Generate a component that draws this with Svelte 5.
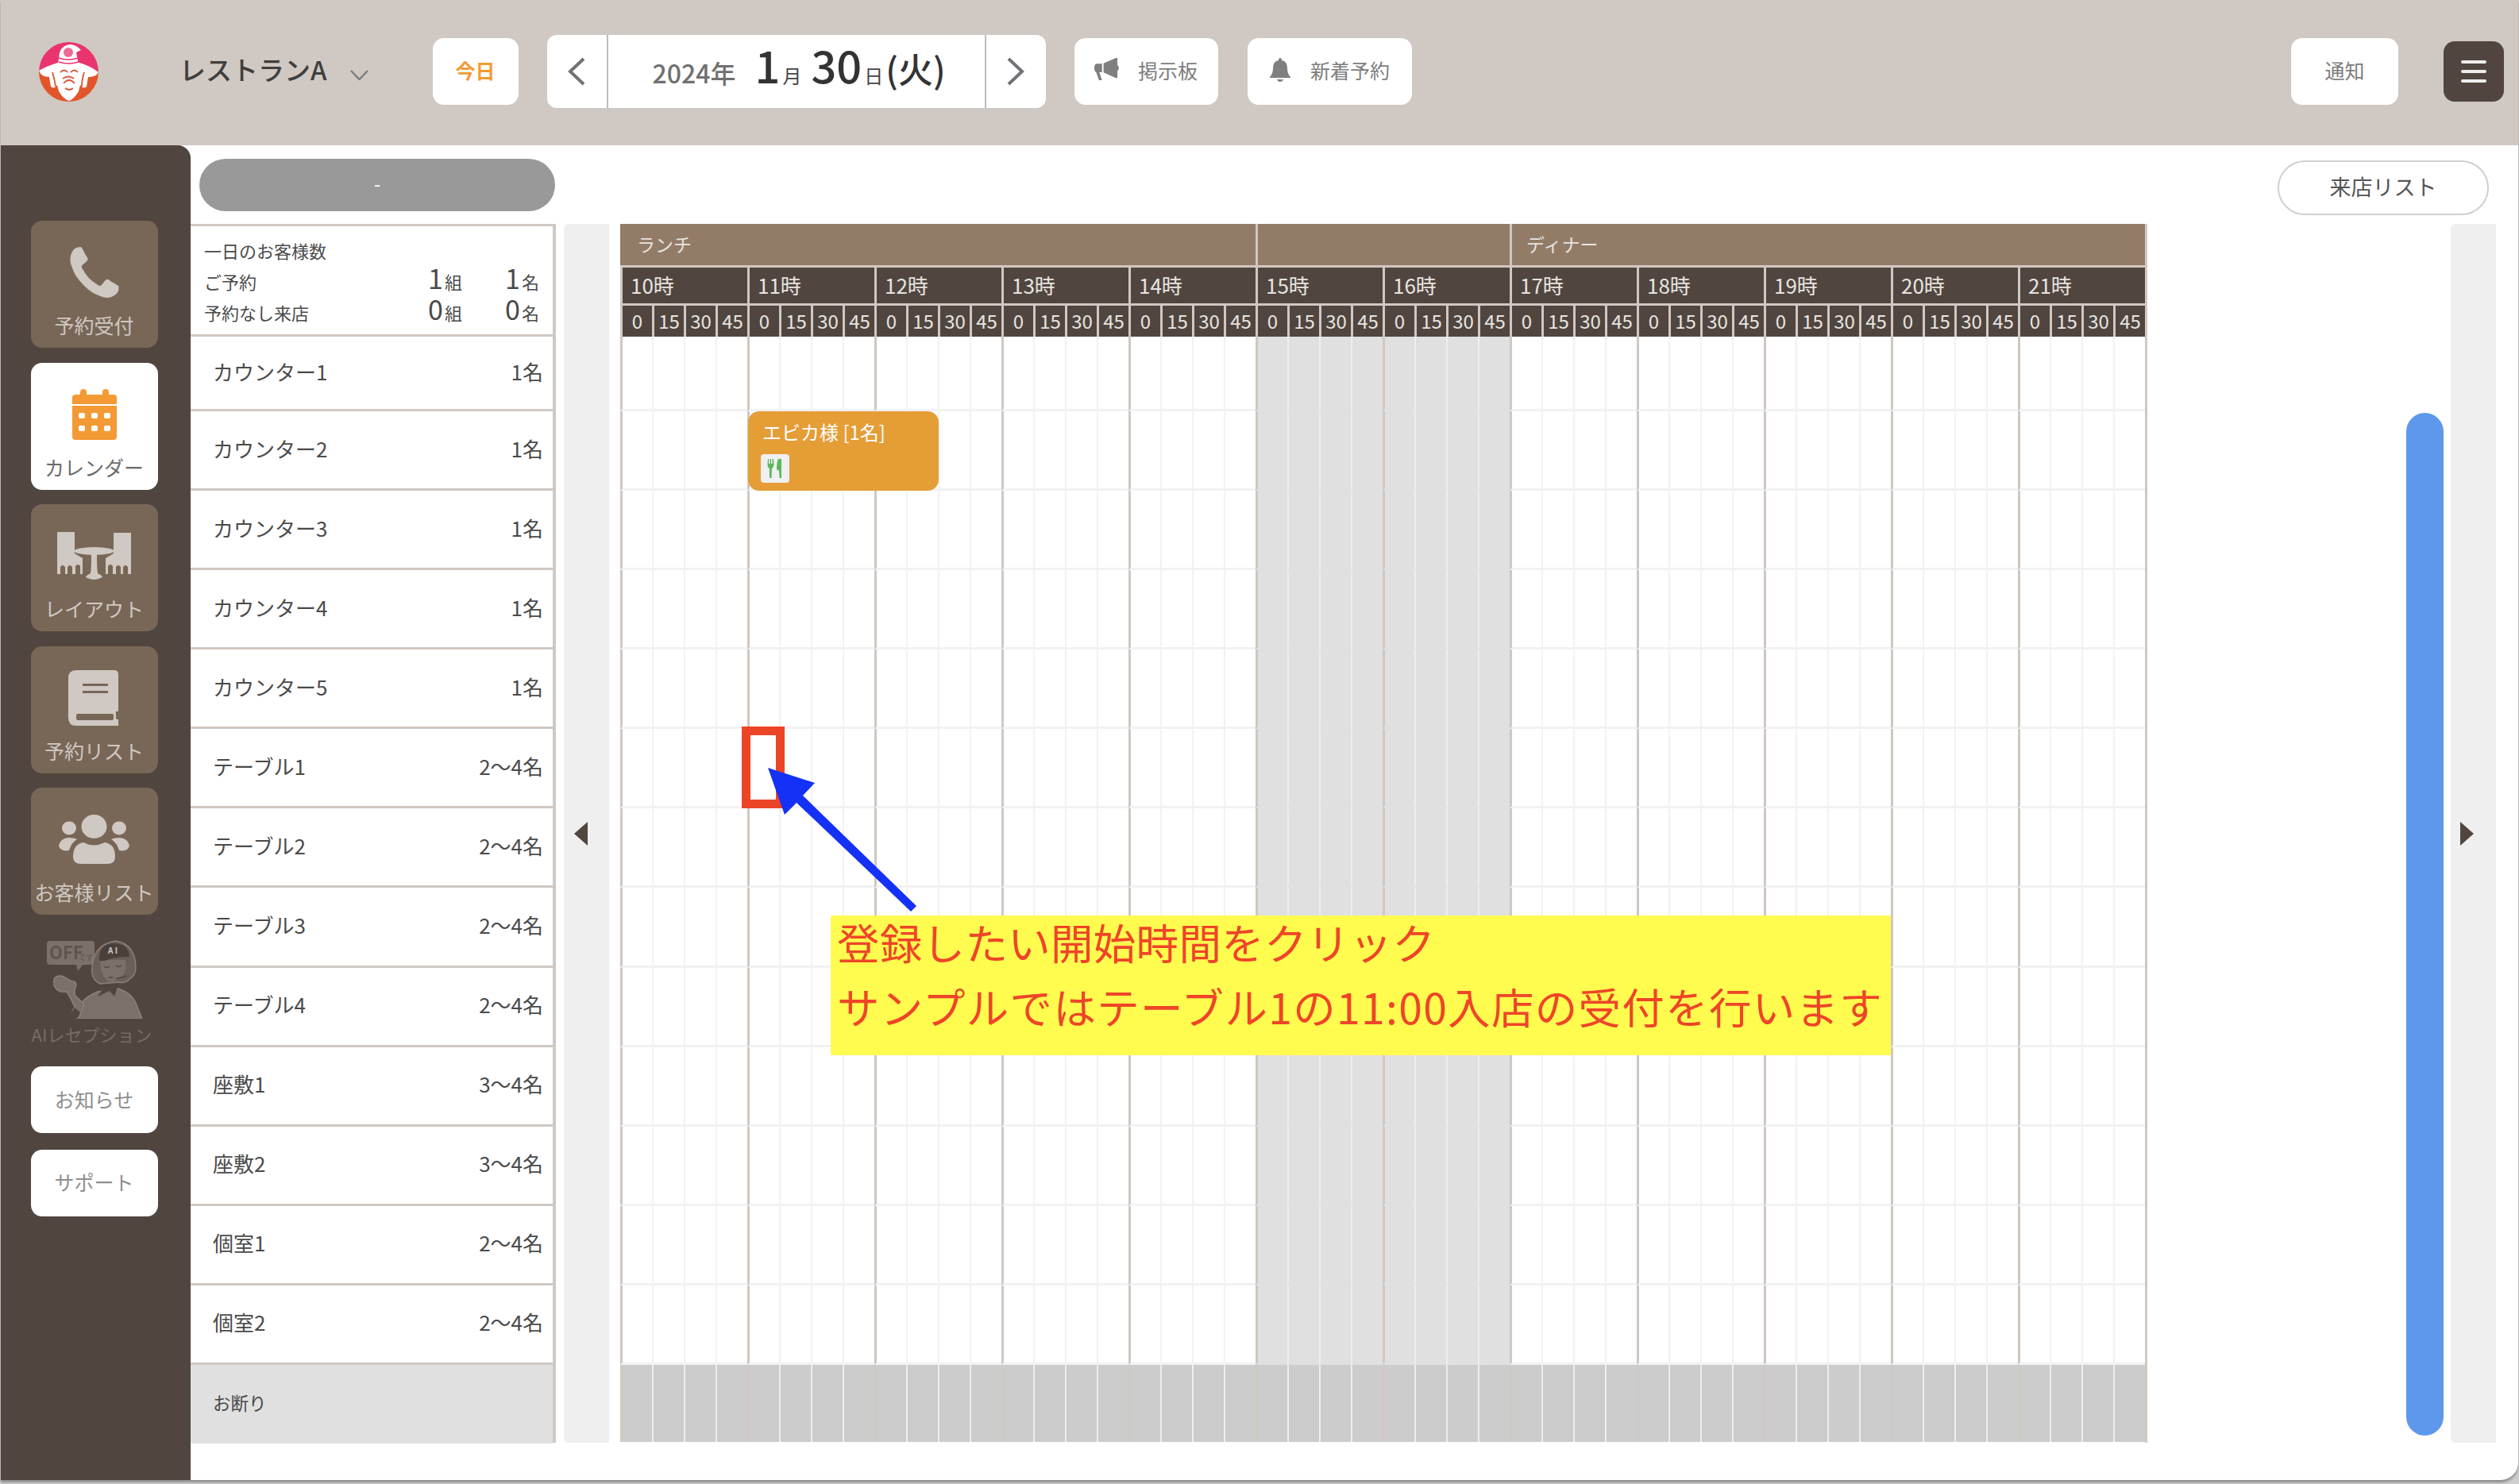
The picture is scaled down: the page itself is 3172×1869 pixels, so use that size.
<script>
  const hours = [10, 11, 12, 13, 14, 15, 16, 17, 18, 19, 20, 21];
  const minutes = [0, 15, 30, 45];

  const seats = [
    { name: "カウンター1", cap: "1名" },
    { name: "カウンター2", cap: "1名" },
    { name: "カウンター3", cap: "1名" },
    { name: "カウンター4", cap: "1名" },
    { name: "カウンター5", cap: "1名" },
    { name: "テーブル1", cap: "2〜4名" },
    { name: "テーブル2", cap: "2〜4名" },
    { name: "テーブル3", cap: "2〜4名" },
    { name: "テーブル4", cap: "2〜4名" },
    { name: "座敷1", cap: "3〜4名" },
    { name: "座敷2", cap: "3〜4名" },
    { name: "個室1", cap: "2〜4名" },
    { name: "個室2", cap: "2〜4名" },
  ];

  // 15時 and 16時 are the closed hours between lunch and dinner
  const isClosed = (h) => h === 15 || h === 16;
</script>

<div class="screen">
  <div class="window">
    <header class="topbar">
      <svg class="logo" viewBox="0 0 75 75">
        <defs>
          <clipPath id="logo-clip"><circle cx="37.5" cy="37.5" r="37.5" /></clipPath>
        </defs>
        <g clip-path="url(#logo-clip)">
          <rect width="75" height="36" fill="#e9346f" />
          <rect y="36" width="75" height="39" fill="#e2552b" />
          <path d="M0 36 Q10 30 24 26 L51 26 Q65 30 75 38 Q72 44 62 44 L60 56 Q56 60 52 54 L50 62 Q44 72 38 74 Q31 72 25 62 L23 54 Q19 60 15 56 L13 44 Q3 44 0 36Z" fill="#fff" />
          <path d="M24 28 L26 13 Q30 3 40 3 Q48 4 53 10 L47 13 L50 28Z" fill="#fff" />
          <circle cx="37" cy="13" r="6" fill="#ec6b92" />
          <path d="M25 20 Q37 24 50 20 M25 25 Q37 29 50 25" stroke="#e9346f" stroke-width="1.6" fill="none" />
          <path d="M27 38 Q32 33 36 38 M40 38 Q45 33 49 38 M17 38 Q20 48 21 56 M57 38 Q54 48 54 56 M31 52 Q38 44 45 52 M33 58 Q38 62 43 58 M30 46 Q37 41 44 46" stroke="#d8573a" stroke-width="1.8" fill="none" />
        </g>
      </svg>

      <div class="shop">レストランA</div>
      <svg class="shop-caret" viewBox="0 0 23 13"><path d="M1 1 L11.5 12 L22 1" /></svg>

      <button class="btn today">今日</button>

      <div class="date-box">
        <div class="date-nav">
          <svg viewBox="0 0 22 36"><path d="M20 2 L3 18 L20 34" /></svg>
        </div>
        <div class="date-label">
          <span class="year">2024年</span>
          <span class="big month">1</span><span class="unit">月</span>
          <span class="big day">30</span><span class="unit">日</span><span class="dow">(火)</span>
        </div>
        <div class="date-nav">
          <svg viewBox="0 0 22 36"><path d="M2 2 L19 18 L2 34" /></svg>
        </div>
      </div>

      <button class="btn board">
        <svg viewBox="0 0 32 30" width="31" height="29">
          <path d="M30 0 L30 26 L28 26 L12 19 L12 7 L28 0Z M10 7.5 L10 18.5 L6 18.5 L7 20 L10 29 L6 29 L2.5 19 Q0 18 0 13 Q0 8 3 7.5Z M30 9 Q32 11 32 13 Q32 15 30 17Z" fill="#7f7f7f" />
        </svg>
        <span>掲示板</span>
      </button>

      <button class="btn fresh">
        <svg viewBox="0 0 28 30" width="28" height="30">
          <path d="M14 0 Q16 0 16 3 Q23 4 23 13 Q23 20 27 24 L27 25 L1 25 L1 24 Q5 20 5 13 Q5 4 12 3 Q12 0 14 0Z M10 27 L18 27 Q17 30 14 30 Q11 30 10 27Z" fill="#7f7f7f" />
        </svg>
        <span>新着予約</span>
      </button>

      <button class="btn notify">通知</button>

      <button class="menu">
        <i></i><i></i><i></i>
      </button>
    </header>

    <div class="body">
      <aside class="side">
        <div class="nav-item">
          <div class="nav-icon">
            <svg viewBox="0 0 1408 1408" width="64" height="64" class="phone">
              <path fill="#d0c8c2" d="M1408 1112q0 27-10 70.5t-21 68.5q-21 50-122 106-94 51-186 51-27 0-53-3.5t-57.5-12.5-47-14.5-55.5-20.5-49-18q-98-35-175-83-127-79-264-216t-216-264q-48-77-83-175-3-9-18-49t-20.5-55.5-14.5-47-12.5-57.5-3.5-53q0-92 51-186 56-101 106-122 25-11 68.5-21t70.5-10q14 0 21 3 18 6 53 76 11 19 30 54t35 63.5 31 53.5q3 4 17.5 25t21.5 35.5 7 28.5q0 20-28.5 50t-62 55-62 53-28.5 46q0 9 5 22.5t8.5 20.5 14 24 11.5 19q76 137 174 235t235 174q2 1 19 11.5t24 14 20.5 8.5 22.5 5q18 0 46-28.5t53-62 55-62 50-28.5q14 0 28.5 7t35.5 21.5 25 17.5q25 15 53.5 31t63.5 35 54 30q70 35 76 53 3 7 3 21z" />
            </svg>
          </div>
          <span>予約受付</span>
        </div>

        <div class="nav-item active">
          <div class="nav-icon">
            <svg viewBox="0 0 56 64" width="56" height="64">
              <path fill="#f39a34" d="M14 0 Q18 0 18 4 L18 7 L38 7 L38 4 Q38 0 42 0 Q46 0 46 4 L46 7 L52 7 Q56 7 56 11 L56 19 L0 19 L0 11 Q0 7 4 7 L10 7 L10 4 Q10 0 14 0Z M0 21 L56 21 L56 60 Q56 64 52 64 L4 64 Q0 64 0 60Z" />
              <g fill="#fff">
                <rect x="8" y="30" width="8" height="7" rx="2" />
                <rect x="24" y="30" width="8" height="7" rx="2" />
                <rect x="40" y="30" width="8" height="7" rx="2" />
                <rect x="8" y="46" width="8" height="7" rx="2" />
                <rect x="24" y="46" width="8" height="7" rx="2" />
                <rect x="40" y="46" width="8" height="7" rx="2" />
              </g>
            </svg>
          </div>
          <span>カレンダー</span>
        </div>

        <div class="nav-item">
          <div class="nav-icon">
            <svg viewBox="0 0 95 60" width="95" height="60">
              <g fill="#d0c8c2">
                <path d="M1 0 L23 0 L23 27 L33 33 L33 53 L30 53 L30 43 Q27 39 24 43 L24 53 L20 53 L20 44 Q17 40 14 44 L14 53 L11 53 L11 44 Q8 40 5 44 L5 53 L1 53Z" />
                <path d="M94 1 L72 1 L72 27 L62 33 L62 53 L65 53 L65 43 Q68 39 71 43 L71 53 L75 53 L75 44 Q78 40 81 44 L81 53 L84 53 L84 44 Q87 40 90 44 L90 53 L94 53Z" />
                <ellipse cx="47.5" cy="24" rx="25" ry="5" />
                <path d="M44 28 L51 28 Q51 46 52 52 Q58 55 58 57 Q52 60 47.5 60 Q43 60 37 57 Q37 55 43 52 Q44 46 44 28Z" />
              </g>
            </svg>
          </div>
          <span>レイアウト</span>
        </div>

        <div class="nav-item">
          <div class="nav-icon">
            <svg viewBox="0 0 63 70" width="63" height="70" class="book">
              <path fill="#d0c8c2" d="M10 0 L57 0 Q63 0 63 5 L63 52 L60 52 Q60 53 60 61 Q60 62 63 62 L63 70 L10 70 Q0 70 0 60 L0 10 Q0 0 10 0Z" />
              <rect x="10" y="55" width="47" height="8" rx="2" fill="#786757" />
              <rect x="18" y="17" width="32" height="3" fill="#786757" />
              <rect x="18" y="26" width="32" height="3" fill="#786757" />
            </svg>
          </div>
          <span>予約リスト</span>
        </div>

        <div class="nav-item">
          <div class="nav-icon">
            <svg viewBox="0 0 89 62" width="89" height="62">
              <g fill="#d0c8c2">
                <ellipse cx="44.5" cy="15" rx="16" ry="15" />
                <ellipse cx="13" cy="17" rx="9" ry="8.5" />
                <ellipse cx="76" cy="17" rx="9" ry="8.5" />
                <path d="M28 62 Q18 62 18 53 Q18 37 31 35 Q44 42 58 35 Q71 37 71 53 Q71 62 61 62Z" />
                <path d="M0 39 Q2 30 12 29 Q19 29 23 31 Q16 35 13 45 Q2 47 0 39Z" />
                <path d="M89 39 Q87 30 77 29 Q70 29 66 31 Q73 35 76 45 Q87 47 89 39Z" />
              </g>
            </svg>
          </div>
          <span>お客様リスト</span>
        </div>

        <div class="ai">
          <svg viewBox="0 0 122 100" width="122" height="100">
            <!-- speech bubble -->
            <path d="M5 2 L57 2 Q61 2 61 6 L61 28 Q61 32 57 32 L46 32 L40 40 L38 32 L5 32 Q1 32 1 28 L1 6 Q1 2 5 2Z" fill="#7c7168" />
            <text x="4" y="25" class="off">OFF</text>
            <text x="41" y="26" class="off-small">です</text>
            <!-- body -->
            <path d="M38 100 L45 80 Q50 72 65 66 L91 62 Q108 68 113 80 L121 100Z" fill="#7c7168" stroke="#8c8279" stroke-width="1.4" />
            <!-- hand and arm -->
            <path d="M10 50 Q14 44 22 47 L33 53 Q38 52 38 58 Q36 62 36 70 L48 82 L42 98 L30 98 L36 85 Q30 72 26 66 Q14 68 10 58Z" fill="#7c7168" stroke="#8c8279" stroke-width="1.4" />
            <path d="M28 99 L36 86 L43 92 L40 99Z" fill="#50463f" />
            <!-- hair -->
            <path d="M58 35 Q60 6 88 2 Q112 6 113 35 Q113 46 105 50 Q100 56 92 54 L68 56 Q56 50 58 35Z" fill="#6a6058" stroke="#8c8279" stroke-width="1.4" />
            <!-- face -->
            <path d="M68 26 L100 26 Q102 44 92 50 Q84 56 78 52 Q68 46 68 26Z" fill="#7c7168" />
            <!-- cap -->
            <path d="M67 27 Q66 5 86 5 Q104 6 105 22 Q88 22 80 25 Q72 28 67 27Z" fill="#4a403a" />
            <text x="78" y="18" class="hat">A I</text>
            <path d="M73 34 Q77 37 80 34 M88 33 Q92 36 95 33 M79 48 L84 48 M88 50 L101 46" stroke="#50463f" stroke-width="1.5" fill="none" />
            <!-- scarf -->
            <path d="M65 72 L75 57 L91 57 L86 72 L80 65Z" fill="#50463f" />
          </svg>
          <span>AIレセプション</span>
        </div>

        <button class="side-btn first">お知らせ</button>
        <button class="side-btn second">サポート</button>
      </aside>

      <main class="main">
        <div class="toolbar">
          <div class="pill">-</div>
          <button class="visit">来店リスト</button>
        </div>

        <div class="board-area">
          <section class="roster">
            <div class="summary">
              <div class="sum-title">一日のお客様数</div>
              <div class="sum-row">
                <span>ご予約</span>
                <span class="val"><b>1</b>組</span>
                <span class="val"><b>1</b>名</span>
              </div>
              <div class="sum-row">
                <span>予約なし来店</span>
                <span class="val"><b>0</b>組</span>
                <span class="val"><b>0</b>名</span>
              </div>
            </div>
            {#each seats as seat, i}
              <div class="seat" class:short={i === 0}>
                <span>{seat.name}</span>
                <span>{seat.cap}</span>
              </div>
            {/each}
            <div class="seat refuse"><span>お断り</span></div>
          </section>

          <div class="pager">
            <svg viewBox="0 0 18 32" width="17" height="34"><path d="M18 0 L18 32 L0 16Z" fill="#50463f" /></svg>
          </div>

          <section class="timeline">
            <div class="band">
              <div class="band-cell">ランチ</div>
              <div class="band-cell"></div>
              <div class="band-cell">ディナー</div>
            </div>
            <div class="hours">
              {#each hours as h}
                <div class="hour">{h}時</div>
              {/each}
            </div>
            <div class="mins">
              {#each hours as h}
                {#each minutes as m}
                  <div class="min">{m}</div>
                {/each}
              {/each}
            </div>

            <div class="grid">
              {#each seats as seat, i}
                <div class="line" class:short={i === 0}>
                  {#each hours as h}
                    {#each minutes as m}
                      <div class="slot" class:top={m === 0} class:closed={isClosed(h)}></div>
                    {/each}
                  {/each}
                </div>
              {/each}
              <div class="line refuse">
                {#each hours as h}
                  {#each minutes as m}
                    <div class="slot" class:top={m === 0}></div>
                  {/each}
                {/each}
              </div>

              <div class="booking">
                <div class="booking-name">エビカ様 [1名]</div>
                <div class="booking-icon">
                  <svg viewBox="0 0 20 24" width="20" height="24">
                    <path fill="#5cb85c" d="M1 0 L2 0 L2 6 L3.5 6 L3.5 0 L5 0 L5 6 L6.5 6 L6.5 0 L8 0 L8.5 7 Q8 11 6 12 L5.5 24 L3 24 L2.8 12 Q0.5 11 0.5 7Z M14 0 L18 0 L18 24 L15.5 24 L15 15 L12 13 Q12 4 14 0Z" />
                  </svg>
                </div>
              </div>
            </div>
          </section>

          <div class="scroll-thumb"></div>

          <div class="pager right">
            <svg viewBox="0 0 18 32" width="17" height="34"><path d="M0 0 L0 32 L18 16Z" fill="#50463f" /></svg>
          </div>
        </div>
      </main>
    </div>
  </div>

  <!-- annotation drawn on top of the screenshot -->
  <div class="mark"></div>
  <svg class="arrow" viewBox="0 0 200 190" width="200" height="190">
    <path d="M2 2 L61 21 L46 37 L189 176 L182 183 L38 46 L23 61Z" fill="#1431f5" />
  </svg>
  <div class="note">
    <p class="first-line">登録したい開始時間をクリック</p>
    <p class="second-line">サンプルではテーブル1の11:00入店の受付を行います</p>
  </div>
</div>

<style>
  :global(body) {
    margin: 0;
    font-family: "Noto Sans CJK JP", "Noto Sans", sans-serif;
  }

  .screen {
    position: relative;
    width: 3172px;
    height: 1869px;
    background: #cfcfcf;
    overflow: hidden;
  }

  .window {
    width: 3170px;
    height: 1864px;
    margin-left: 1px;
    background: #fff;
    border-radius: 0 0 22px 0;
    box-shadow: 0 3px 3px #8e8e8e;
    overflow: hidden;
    display: flex;
    flex-direction: column;
  }

  button {
    font-family: inherit;
    border: none;
    cursor: pointer;
    padding: 0;
  }

  /* top bar */
  .topbar {
    height: 183px;
    flex: none;
    box-sizing: border-box;
    padding-bottom: 3px;
    background: #d0c8c2;
    display: flex;
    align-items: center;
  }

  .logo {
    width: 75px;
    height: 75px;
    margin-left: 48px;
  }

  .shop {
    margin-left: 102px;
    font-size: 33px;
    font-weight: 500;
    color: #3f3f3f;
    padding-bottom: 6px;
  }

  .shop-caret {
    width: 23px;
    height: 13px;
    margin: 8px 0 0 29px;
    fill: none;
    stroke: #7a7f7f;
    stroke-width: 2.5;
  }

  .btn {
    height: 84px;
    padding-bottom: 5px;
    background: #fff;
    border-radius: 14px;
    font-size: 25px;
    color: #7d7d7d;
    display: flex;
    align-items: center;
    justify-content: center;
    gap: 24px;
  }

  .today {
    width: 108px;
    margin-left: 81px;
    color: #f39a34;
    font-weight: 700;
  }

  .date-box {
    width: 628px;
    height: 92px;
    margin-left: 36px;
    background: #fff;
    border-radius: 12px;
    display: flex;
  }

  .date-nav {
    width: 75px;
    display: flex;
    align-items: center;
    justify-content: center;
  }

  .date-nav svg {
    width: 22px;
    height: 36px;
    fill: none;
    stroke: #6f7377;
    stroke-width: 4;
  }

  .date-label {
    flex: 1;
    border-left: 2px solid #bdbdbd;
    border-right: 2px solid #bdbdbd;
    padding: 0 0 0 56px;
    display: flex;
    align-items: baseline;
    line-height: 74px;
    color: #333;
    white-space: nowrap;
  }

  .year {
    font-size: 32px;
    font-weight: 500;
    color: #707070;
  }

  .big {
    font-size: 56px;
    font-weight: 500;
  }

  .month {
    margin-left: 24px;
  }

  .day {
    margin-left: 12px;
  }

  .unit {
    font-size: 24px;
    margin-left: 3px;
    color: #444;
  }

  .dow {
    font-size: 44px;
    font-weight: 500;
    margin-left: 3px;
  }

  .board {
    width: 181px;
    margin-left: 36px;
  }

  .fresh {
    width: 207px;
    margin-left: 37px;
  }

  .notify {
    width: 135px;
    margin-left: auto;
  }

  .menu {
    width: 76px;
    height: 76px;
    margin: 0 18px 0 57px;
    background: #50463f;
    border-radius: 14px;
    display: flex;
    flex-direction: column;
    align-items: center;
    justify-content: center;
    gap: 8px;
  }

  .menu i {
    width: 32px;
    height: 4px;
    border-radius: 2px;
    background: #eee;
  }

  .body {
    flex: 1;
    min-height: 0;
    display: flex;
  }

  /* side menu */
  .side {
    width: 239px;
    flex: none;
    box-sizing: border-box;
    background: #50463f;
    border-top-right-radius: 16px;
    padding: 95px 4px 0 0;
    display: flex;
    flex-direction: column;
    align-items: center;
    gap: 18.5px;
  }

  .nav-item {
    width: 160px;
    height: 160px;
    flex: none;
    box-sizing: border-box;
    padding-top: 8px;
    background: #786757;
    border-radius: 14px;
    color: #d0c8c2;
    font-size: 25px;
    line-height: 18px;
    text-align: center;
    white-space: nowrap;
  }

  .nav-item.active {
    background: #fff;
    color: #6a6a6a;
  }

  .nav-icon {
    height: 114px;
    display: flex;
    align-items: center;
    justify-content: center;
  }

  .phone {
    transform: scaleX(0.96);
  }

  .book {
    margin-left: -2px;
  }

  .ai {
    width: 160px;
    box-sizing: border-box;
    margin-top: 12px;
    padding-right: 6px;
    color: #776c64;
    font-size: 22px;
    line-height: 26px;
    text-align: center;
    white-space: nowrap;
  }

  .ai svg {
    display: block;
    margin: 0 0 6px 19px;
  }

  .off {
    font-size: 22px;
    font-weight: 700;
    fill: #5f554e;
  }

  .off-small {
    font-size: 9px;
    fill: #5f554e;
  }

  .hat {
    font-size: 10px;
    font-weight: 700;
    fill: #d0c8c2;
  }

  .side-btn {
    width: 160px;
    height: 84px;
    flex: none;
    padding-bottom: 3px;
    background: #fff;
    border-radius: 14px;
    font-size: 25px;
    color: #8e8e8e;
  }

  .side-btn.first {
    margin-top: 10px;
  }

  .side-btn.second {
    margin-top: 2px;
  }

  /* main area */
  .main {
    flex: 1;
    min-width: 0;
  }

  .toolbar {
    height: 99px;
    box-sizing: border-box;
    padding: 17px 37px 0 11px;
    display: flex;
    align-items: flex-start;
    justify-content: space-between;
  }

  .pill {
    width: 448px;
    height: 66px;
    border-radius: 33px;
    background: #999;
    color: #fff;
    font-size: 24px;
    line-height: 62px;
    text-align: center;
  }

  .visit {
    width: 266px;
    height: 69px;
    margin-top: 2px;
    padding-bottom: 4px;
    border: 2px solid #cfcfcf;
    border-radius: 35px;
    background: #fff;
    color: #555;
    font-size: 27px;
  }

  .board-area {
    height: 1535px;
    display: flex;
  }

  .roster {
    width: 460px;
    flex: none;
    box-sizing: border-box;
    border-top: 3px solid #d0c8c2;
    border-right: 4px solid #d0c8c2;
    color: #4a4a4a;
  }

  .summary {
    height: 139px;
    box-sizing: border-box;
    padding: 14px 17px 0 17px;
    border-bottom: 3px solid #d0c8c2;
    font-size: 22px;
  }

  .sum-title {
    line-height: 32px;
    margin-bottom: 2px;
  }

  .sum-row {
    display: grid;
    grid-template-columns: 1fr 100px 97px;
    height: 39px;
    line-height: 39px;
    align-items: baseline;
  }

  .val {
    text-align: right;
  }

  .val b {
    font-size: 34px;
    font-weight: 400;
    line-height: 1;
    margin-right: 2px;
  }

  .seat {
    height: 100.08px;
    box-sizing: border-box;
    padding: 0 12px 5px 28px;
    border-bottom: 3px solid #d0c8c2;
    display: flex;
    align-items: center;
    justify-content: space-between;
    font-size: 26px;
    white-space: nowrap;
  }

  .seat.short {
    height: 94px;
  }

  .seat.refuse {
    height: 99px;
    border-bottom: 0;
    background: #e0e0e0;
    font-size: 22.5px;
  }

  .pager {
    width: 57px;
    flex: none;
    box-sizing: border-box;
    margin-left: 10px;
    padding-right: 14px;
    background: #efefef;
    border-radius: 6px 0 0 6px;
    display: flex;
    align-items: center;
    justify-content: center;
  }

  .pager.right {
    margin-left: 9px;
    padding-right: 17px;
  }

  /* time table */
  .timeline {
    width: 1923px;
    flex: none;
    margin-left: 14px;
    color: #e8e4e0;
  }

  .band {
    display: grid;
    grid-template-columns: 800px 320px 803px;
    height: 55px;
    background: #937c67;
    border-bottom: 3px solid #d0c8c2;
    box-sizing: border-box;
  }

  .band-cell {
    border-left: 3px solid #d0c8c2;
    padding-left: 18px;
    font-size: 23px;
    line-height: 50px;
  }

  .band-cell:first-child {
    border-left: 0;
    padding-left: 21px;
  }

  .band-cell:last-child {
    border-right: 3px solid #d0c8c2;
  }

  .hours {
    display: flex;
    height: 48px;
    box-sizing: border-box;
    border-bottom: 3px solid #d0c8c2;
    border-right: 3px solid #d0c8c2;
  }

  .hour {
    width: 160px;
    box-sizing: border-box;
    flex: none;
    padding-left: 10px;
    background: #50463f;
    border-left: 3px solid #d0c8c2;
    font-size: 26px;
    line-height: 44px;
  }

  .mins {
    display: flex;
    height: 39px;
    box-sizing: border-box;
    border-right: 3px solid #d0c8c2;
  }

  .min {
    width: 40px;
    box-sizing: border-box;
    flex: none;
    background: #50463f;
    border-left: 3px solid #d0c8c2;
    font-size: 24px;
    line-height: 37px;
    text-align: center;
  }

  .grid {
    position: relative;
    height: 1393px;
    border-right: 3px solid #d0c8c2;
    box-sizing: border-box;
  }

  .line {
    display: flex;
    height: 100.08px;
  }

  .line.short {
    height: 94px;
  }

  .line.refuse {
    height: 97px;
  }

  .slot {
    width: 40px;
    flex: none;
    box-sizing: border-box;
    border-left: 2px solid #f2f2f2;
    border-bottom: 3px solid #f2f2f2;
  }

  .slot.top {
    border-left: 3px solid #cfc7c1;
  }

  .slot.closed {
    background: #e0e0e0;
    border-left-color: #eeeeee;
    border-bottom-color: #e0e0e0;
  }

  .slot.closed.top {
    border-left-color: #cfc7c1;
  }

  .refuse .slot {
    background: #ccc;
    border-left-color: #eee;
    border-bottom: 0;
  }

  .refuse .slot.top {
    border-left-color: #eee;
  }

  .refuse .slot:nth-child(4n + 1) {
    border-left-color: #d0c8c2;
  }

  .booking {
    position: absolute;
    left: 161px;
    top: 94px;
    width: 240px;
    height: 100px;
    box-sizing: border-box;
    padding: 9px 18px;
    background: #e59d36;
    border-radius: 14px;
    color: #fff;
    font-size: 24px;
  }

  .booking-name {
    line-height: 34px;
    white-space: nowrap;
  }

  .booking-icon {
    width: 36px;
    height: 36px;
    margin: 11px 0 0 -2px;
    background: #f0f0f0;
    border-radius: 4px;
    display: flex;
    align-items: center;
    justify-content: center;
  }

  .scroll-thumb {
    width: 47px;
    height: 1288px;
    flex: none;
    margin: 238px 0 0 326px;
    background: #5e98ec;
    border-radius: 24px;
  }

  /* annotation overlay */
  .mark {
    position: absolute;
    left: 934px;
    top: 915px;
    width: 54px;
    height: 103px;
    box-sizing: border-box;
    border: 11px solid #ec4427;
  }

  .arrow {
    position: absolute;
    left: 965px;
    top: 965px;
  }

  .note {
    position: absolute;
    left: 1046px;
    top: 1153px;
    width: 1335px;
    height: 176px;
    box-sizing: border-box;
    padding: 0 0 0 8px;
    background: #fffb4f;
    color: #ee4528;
    font-size: 53.5px;
    white-space: nowrap;
  }

  .note p {
    margin: 0;
    height: 81px;
    line-height: 66px;
  }

  .first-line {
    letter-spacing: 0.3px;
  }

  .second-line {
    letter-spacing: 1.3px;
  }
</style>
